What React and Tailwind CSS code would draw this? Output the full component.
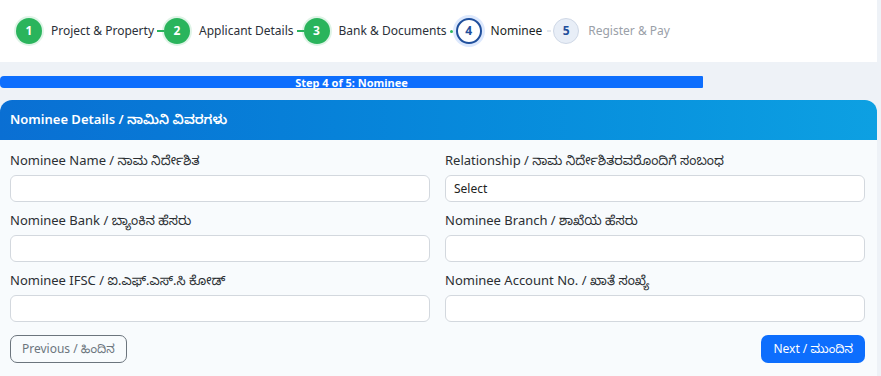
const steps = [
  { n: 1, label: 'Project & Property', state: 'done' },
  { n: 2, label: 'Applicant Details', state: 'done' },
  { n: 3, label: 'Bank & Documents', state: 'done' },
  { n: 4, label: 'Nominee', state: 'active' },
  { n: 5, label: 'Register & Pay', state: 'todo' },
];

function StepCircle({ n, state }) {
  if (state === 'done') {
    return (
      <span className="flex h-[26px] w-[26px] shrink-0 items-center justify-center rounded-full bg-[#2ab45c] text-[12px] font-bold text-white shadow-[0_0_0_2px_rgba(42,180,92,0.15)]">
        {n}
      </span>
    );
  }
  if (state === 'active') {
    return (
      <span className="flex h-[26px] w-[26px] shrink-0 items-center justify-center rounded-full border-2 border-[#1f4f9c] bg-white text-[12px] font-bold text-[#1f4f9c] shadow-[0_0_0_3px_rgba(59,130,246,0.18)]">
        {n}
      </span>
    );
  }
  return (
    <span className="flex h-[26px] w-[26px] shrink-0 items-center justify-center rounded-full border border-[#cfd8e6] bg-[#e8eef7] text-[12px] font-bold text-[#1f4f9c]">
      {n}
    </span>
  );
}

function Stepper() {
  return (
    <div className="flex h-[62px] w-[877px] items-center bg-white pl-[16px]">
      {steps.map((s, i) => (
        <div key={s.n} className="flex items-center">
          <StepCircle n={s.n} state={s.state} />
          <span
            className={
              'ml-[9px] text-[12px] ' +
              (s.state === 'todo' ? 'text-[#9aa0a8]' : s.state === 'active' ? 'text-[#1b1f24]' : 'text-[#2b3038]')
            }
          >
            {s.label}
          </span>
          {i < 2 && <span className="ml-[3px] h-[2px] w-[7px] bg-[#2ab45c]" />}
          {i === 2 && <span className="ml-[3px] mr-[3px] h-[3px] w-[3px] rounded-full bg-[#2ab45c]" />}
          {i === 3 && <span className="ml-[5px] mr-[2px] h-[2px] w-[4px] bg-[#e3e8ef]" />}
        </div>
      ))}
    </div>
  );
}

function Field({ label, select }) {
  return (
    <div className="flex flex-col">
      <label className="mb-[5px] text-[13px] leading-[19px] text-[#2b2f33]">{label}</label>
      {select ? (
        <div className="flex h-[27px] items-center rounded-[6px] border border-[#d3d8de] bg-white px-[8px] text-[12px] text-[#222]">
          Select
        </div>
      ) : (
        <input className="h-[27px] rounded-[6px] border border-[#d3d8de] bg-white px-[8px] text-[12px] outline-none" />
      )}
    </div>
  );
}

export default function App() {
  return (
    <div
      className="min-h-[376px] w-[881px] overflow-hidden bg-[#eef2f7]"
      style={{ fontFamily: '"Segoe UI", "Noto Sans", "Noto Sans Kannada", "Open Sans", sans-serif' }}
    >
      <Stepper />
      <div className="h-[14px]" />
      <div className="flex h-[12px] w-[703px] items-center justify-center rounded-r-[1px] rounded-l-[4px] bg-[#0d6efd] text-[11px] font-bold leading-none text-white">
        Step 4 of 5: Nominee
      </div>
      <div className="h-[12px]" />
      <div className="w-[877px] overflow-hidden rounded-t-[12px] bg-[#f8fbfd]">
        <div className="flex h-[40px] items-center bg-gradient-to-r from-[#0a6fd3] to-[#0da0e2] px-[10px] text-[13px] font-semibold text-white">
          Nominee Details / ನಾಮಿನಿ ವಿವರಗಳು
        </div>
        <div className="px-[10px] pt-[11px] pb-[13px]">
          <div className="grid grid-cols-2 gap-x-[15px] gap-y-[9px] pr-[2px]">
            <Field label="Nominee Name / ನಾಮ ನಿರ್ದೇಶಿತ" />
            <Field label="Relationship / ನಾಮ ನಿರ್ದೇಶಿತರವರೊಂದಿಗೆ ಸಂಬಂಧ" select />
            <Field label="Nominee Bank / ಬ್ಯಾಂಕಿನ ಹೆಸರು" />
            <Field label="Nominee Branch / ಶಾಖೆಯ ಹೆಸರು" />
            <Field label="Nominee IFSC / ಐ.ಎಫ್.ಎಸ್.ಸಿ ಕೋಡ್" />
            <Field label="Nominee Account No. / ಖಾತೆ ಸಂಖ್ಯೆ" />
          </div>
          <div className="mt-[13px] flex items-center justify-between pr-[2px]">
            <button className="h-[28px] rounded-[7px] border border-[#6c757d] bg-transparent px-[11px] text-[12px] text-[#6c757d]">
              Previous / ಹಿಂದಿನ
            </button>
            <button className="h-[28px] rounded-[7px] bg-[#0d6efd] px-[12px] text-[12px] text-white">
              Next / ಮುಂದಿನ
            </button>
          </div>
        </div>
      </div>
    </div>
  );
}
